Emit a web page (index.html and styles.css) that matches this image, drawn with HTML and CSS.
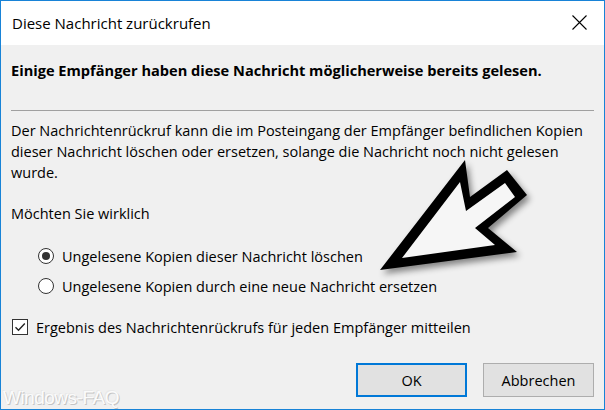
FILE: index.html
```html
<!DOCTYPE html>
<html lang="de">
<head>
<meta charset="utf-8">
<title>Diese Nachricht zurückrufen</title>
<link rel="stylesheet" href="styles.css">
</head>
<body>
<div class="window">
  <div class="titlebar">
    <span class="title">Diese Nachricht zurückrufen</span>
    <svg class="close" width="15" height="15" viewBox="0 0 15 15"><path d="M0.5 0.5 L14.5 14.5 M14.5 0.5 L0.5 14.5" stroke="#000" stroke-width="1.1" fill="none"/></svg>
  </div>
  <div class="content">
    <p class="heading">Einige Empfänger haben diese Nachricht möglicherweise bereits gelesen.</p>
    <div class="sep"></div>
    <p class="para">Der Nachrichtenrückruf kann die im Posteingang der Empfänger befindlichen Kopien dieser Nachricht löschen oder ersetzen, solange die Nachricht noch nicht gelesen wurde.</p>
    <p class="question">Möchten Sie wirklich</p>
    <div class="options">
      <div class="option">
        <span class="radio checked"></span>
        <span>Ungelesene Kopien dieser Nachricht löschen</span>
      </div>
      <div class="option">
        <span class="radio"></span>
        <span>Ungelesene Kopien durch eine neue Nachricht ersetzen</span>
      </div>
    </div>
    <div class="check-row">
      <svg class="checkbox" width="16" height="16" viewBox="0 0 16 16"><rect x="0.5" y="0.5" width="15" height="15" fill="#fff" stroke="#333"/><path d="M3.5 8.2 L6.5 11.2 L12.8 4.5" stroke="#222" stroke-width="1.4" fill="none"/></svg>
      <span>Ergebnis des Nachrichtenrückrufs für jeden Empfänger mitteilen</span>
    </div>
    <div class="buttons">
      <button class="btn default">OK</button>
      <button class="btn">Abbrechen</button>
    </div>
  </div>
  <svg class="arrow" width="605" height="410" viewBox="0 0 605 410">
    <g class="arrow-shape">
      <polygon points="380,270 465,160 470,197 507,170 527,195 488,228 517,252" fill="#000"/>
      <polygon points="402,258 460,182 466,211 505,183 515,197 475,228 495,245" fill="#f6f6f6"/>
    </g>
  </svg>
  <div class="watermark">Windows-FAQ</div>
</div>
</body>
</html>
```
FILE: styles.css
```css
* { box-sizing: border-box; }
html, body { margin: 0; padding: 0; }
body {
  width: 605px;
  height: 410px;
  overflow: hidden;
  font-family: "Open Sans", "Noto Sans", sans-serif;
  color: #000;
}
.window {
  position: relative;
  width: 605px;
  height: 410px;
  border: 1px solid #1883d7;
  background: #f0f0f0;
  display: flex;
  flex-direction: column;
  overflow: hidden;
}
.titlebar {
  height: 44px;
  flex: none;
  background: #fff;
  display: flex;
  align-items: center;
  padding: 0 17px 0 11px;
}
.title {
  font-size: 15px;
  line-height: 20px;
  margin-top: -1px;
}
.close {
  margin-left: auto;
  margin-top: -1px;
  display: block;
}
.content {
  padding: 0 10px 0 10px;
  font-size: 14.5px;
  line-height: 21px;
  display: flex;
  flex-direction: column;
}
p { margin: 0; }
.heading {
  font-weight: 700;
  font-size: 14.6px;
  margin-top: 15px;
  white-space: nowrap;
}
.sep {
  height: 1px;
  background: #a0a0a0;
  margin-top: 29px;
}
.para {
  margin-top: 9px;
}
.question {
  margin-top: 20px;
}
.options {
  margin-top: 17px;
  padding-left: 27px;
  display: flex;
  flex-direction: column;
}
.option {
  height: 30px;
  display: flex;
  align-items: center;
  gap: 8px;
}
.radio {
  width: 16px;
  height: 16px;
  border: 1px solid #333;
  border-radius: 50%;
  background: #fff;
  display: flex;
  align-items: center;
  justify-content: center;
  flex: none;
}
.radio.checked::after {
  content: "";
  width: 8px;
  height: 8px;
  border-radius: 50%;
  background: #333;
}
.check-row {
  margin-top: 15px;
  height: 22px;
  display: flex;
  align-items: center;
  gap: 8px;
  padding-left: 1px;
}
.checkbox { display: block; flex: none; }
.buttons {
  margin-top: 25px;
  display: flex;
  justify-content: flex-end;
  gap: 16px;
}
.btn {
  width: 111px;
  height: 34px;
  font: inherit;
  color: #000;
  background: #e1e1e1;
  border: 1px solid #adadad;
  padding: 0;
  margin: 0;
}
.btn.default {
  border: 2px solid #0078d7;
}
.arrow {
  position: absolute;
  left: -1px;
  top: -1px;
  pointer-events: none;
}
.arrow-shape {
  filter: drop-shadow(3px 4px 3px rgba(0,0,0,0.45));
}
.watermark {
  position: absolute;
  left: 2px;
  bottom: 1px;
  font-family: "Liberation Sans", sans-serif;
  font-size: 19px;
  line-height: 20px;
  letter-spacing: -0.5px;
  color: #fbfbfb;
  text-shadow: 1px 1px 0 #c4c4c4, -1px -1px 0 #e8e8e8;
}
```
